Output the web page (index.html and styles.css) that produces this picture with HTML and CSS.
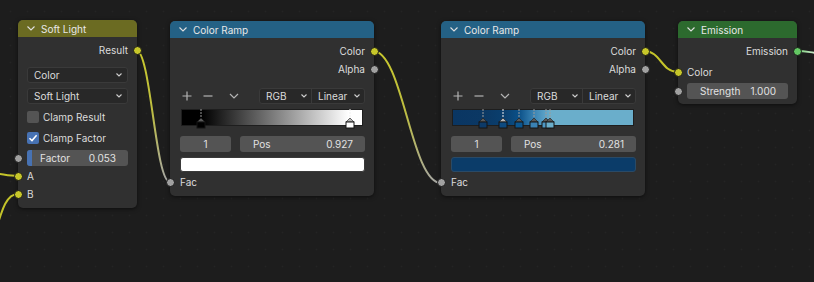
FILE: index.html
```html
<!DOCTYPE html>
<html lang="en">

<head>
    <meta charset="UTF-8">
    <title>Node Editor</title>
    <link rel="stylesheet" href="styles.css">
</head>

<body>
    <div class="canvas">

        <!-- wires are drawn under the nodes -->
        <svg class="wires" width="814" height="282" viewBox="0 0 814 282">
            <defs>
                <linearGradient id="w1" gradientUnits="userSpaceOnUse" x1="136" y1="50" x2="170" y2="182">
                    <stop offset="0" stop-color="#c9c92c" />
                    <stop offset="0.45" stop-color="#bdbd40" />
                    <stop offset="1" stop-color="#a6a6a6" />
                </linearGradient>
                <linearGradient id="w2" gradientUnits="userSpaceOnUse" x1="373" y1="51" x2="441" y2="183">
                    <stop offset="0" stop-color="#c9c92c" />
                    <stop offset="0.45" stop-color="#bdbd40" />
                    <stop offset="1" stop-color="#a6a6a6" />
                </linearGradient>
                <linearGradient id="w4" gradientUnits="userSpaceOnUse" x1="796" y1="51" x2="814" y2="52">
                    <stop offset="0" stop-color="#6fcf6f" />
                    <stop offset="1" stop-color="#c8e6c8" />
                </linearGradient>
            </defs>
            <path class="wire" stroke="url(#w1)" d="M136 50 C151 50 155 182 170 182" />
            <path class="wire" stroke="url(#w2)" d="M373 51 C403 51 411 183 441 183" />
            <path class="wire" stroke="#c4c42a" d="M644 51 C661 51 661 72 678 72" />
            <path class="wire" stroke="url(#w4)" d="M796 51 C806 51 808 52 816 53" />
            <path class="wire" stroke="#c4c42a" d="M-30 172 C0 172 4 176 18 176" />
            <path class="wire" stroke="#c4c42a" d="M-6 236 C2 210 6 194 18 194" />
        </svg>

        <!-- Soft Light (mix) node -->
        <div class="node soft-light">
            <div class="node-header header-mix">
                <svg class="collapse" width="8" height="5" viewBox="0 0 8 5"><path d="M0.5 0.5 L4 4 L7.5 0.5" /></svg>
                <span>Soft Light</span>
            </div>
            <div class="node-body">
                <div class="socket-row out-row first-row">
                    <span>Result</span>
                    <i class="socket out yellow"></i>
                </div>
                <div class="dropdown gap-8">
                    <span>Color</span>
                    <svg class="drop-arrow" width="6" height="4" viewBox="0 0 6 4"><path d="M0.5 0.5 L3 3 L5.5 0.5" /></svg>
                </div>
                <div class="dropdown gap-5">
                    <span>Soft Light</span>
                    <svg class="drop-arrow" width="6" height="4" viewBox="0 0 6 4"><path d="M0.5 0.5 L3 3 L5.5 0.5" /></svg>
                </div>
                <div class="check-row gap-5">
                    <i class="checkbox"></i>
                    <span>Clamp Result</span>
                </div>
                <div class="check-row gap-5">
                    <i class="checkbox checked">
                        <svg width="12" height="12" viewBox="0 0 12 12"><path d="M2.5 6.2 L5 8.6 L9.6 3.2" /></svg>
                    </i>
                    <span>Clamp Factor</span>
                </div>
                <div class="field-row gap-4">
                    <i class="socket in gray"></i>
                    <div class="number slider">
                        <i class="slider-fill" style="width: 5.3%"></i>
                        <span>Factor</span>
                        <span>0.053</span>
                    </div>
                </div>
                <div class="socket-row in-row gap-1">
                    <i class="socket in yellow"></i>
                    <span>A</span>
                </div>
                <div class="socket-row in-row">
                    <i class="socket in yellow"></i>
                    <span>B</span>
                </div>
            </div>
        </div>

        <!-- Color Ramp, grayscale -->
        <div class="node ramp ramp-one">
            <div class="node-header header-converter">
                <svg class="collapse" width="8" height="5" viewBox="0 0 8 5"><path d="M0.5 0.5 L4 4 L7.5 0.5" /></svg>
                <span>Color Ramp</span>
            </div>
            <div class="node-body">
                <div class="socket-row out-row first-row">
                    <span>Color</span>
                    <i class="socket out yellow"></i>
                </div>
                <div class="socket-row out-row">
                    <span>Alpha</span>
                    <i class="socket out gray"></i>
                </div>
                <div class="toolbar">
                    <div class="tools">
                        <svg class="tool" width="10" height="10" viewBox="0 0 10 10"><path d="M5 0.5 V9.5 M0.5 5 H9.5" /></svg>
                        <svg class="tool" width="10" height="10" viewBox="0 0 10 10"><path d="M0.5 5 H9.5" /></svg>
                        <svg class="tool" width="10" height="10" viewBox="0 0 10 10"><path d="M1 3 L5 7 L9 3" /></svg>
                    </div>
                    <div class="mode-group">
                        <div class="mode mode-rgb">
                            <span>RGB</span>
                            <svg class="drop-arrow" width="6" height="4" viewBox="0 0 6 4"><path d="M0.5 0.5 L3 3 L5.5 0.5" /></svg>
                        </div>
                        <div class="mode mode-interp">
                            <span>Linear</span>
                            <svg class="drop-arrow" width="6" height="4" viewBox="0 0 6 4"><path d="M0.5 0.5 L3 3 L5.5 0.5" /></svg>
                        </div>
                    </div>
                </div>
                <div class="ramp-wrap">
                    <div class="ramp-bar gray-ramp"></div>
                    <svg class="stop" style="left: 11%" width="10" height="20" viewBox="0 0 10 20">
                        <path class="stop-line" d="M5 0 V9" />
                        <polygon class="stop-tip" points="1,13 5,9 9,13" />
                        <rect class="stop-box" x="1" y="13" width="8" height="6" fill="#000" />
                    </svg>
                    <svg class="stop active" style="left: 92.7%" width="10" height="20" viewBox="0 0 10 20">
                        <path class="stop-line" d="M5 0 V9" />
                        <polygon class="stop-tip" points="1,13 5,9 9,13" />
                        <rect class="stop-box" x="1" y="13" width="8" height="6" fill="#fff" />
                    </svg>
                </div>
                <div class="number-row">
                    <div class="number index">1</div>
                    <div class="number pos">
                        <span>Pos</span>
                        <span>0.927</span>
                    </div>
                </div>
                <div class="swatch swatch-white"></div>
                <div class="socket-row in-row gap-1">
                    <i class="socket in gray"></i>
                    <span>Fac</span>
                </div>
            </div>
        </div>

        <!-- Color Ramp, blues -->
        <div class="node ramp ramp-two">
            <div class="node-header header-converter">
                <svg class="collapse" width="8" height="5" viewBox="0 0 8 5"><path d="M0.5 0.5 L4 4 L7.5 0.5" /></svg>
                <span>Color Ramp</span>
            </div>
            <div class="node-body">
                <div class="socket-row out-row first-row">
                    <span>Color</span>
                    <i class="socket out yellow"></i>
                </div>
                <div class="socket-row out-row">
                    <span>Alpha</span>
                    <i class="socket out gray"></i>
                </div>
                <div class="toolbar">
                    <div class="tools">
                        <svg class="tool" width="10" height="10" viewBox="0 0 10 10"><path d="M5 0.5 V9.5 M0.5 5 H9.5" /></svg>
                        <svg class="tool" width="10" height="10" viewBox="0 0 10 10"><path d="M0.5 5 H9.5" /></svg>
                        <svg class="tool" width="10" height="10" viewBox="0 0 10 10"><path d="M1 3 L5 7 L9 3" /></svg>
                    </div>
                    <div class="mode-group">
                        <div class="mode mode-rgb">
                            <span>RGB</span>
                            <svg class="drop-arrow" width="6" height="4" viewBox="0 0 6 4"><path d="M0.5 0.5 L3 3 L5.5 0.5" /></svg>
                        </div>
                        <div class="mode mode-interp">
                            <span>Linear</span>
                            <svg class="drop-arrow" width="6" height="4" viewBox="0 0 6 4"><path d="M0.5 0.5 L3 3 L5.5 0.5" /></svg>
                        </div>
                    </div>
                </div>
                <div class="ramp-wrap">
                    <div class="ramp-bar blue-ramp"></div>
                    <svg class="stop" style="left: 17%" width="10" height="20" viewBox="0 0 10 20">
                        <path class="stop-line" d="M5 0 V9" />
                        <polygon class="stop-tip" points="1,13 5,9 9,13" />
                        <rect class="stop-box" x="1" y="13" width="8" height="6" fill="#0c3a68" />
                    </svg>
                    <svg class="stop active" style="left: 28.1%" width="10" height="20" viewBox="0 0 10 20">
                        <path class="stop-line" d="M5 0 V9" />
                        <polygon class="stop-tip" points="1,13 5,9 9,13" />
                        <rect class="stop-box" x="1" y="13" width="8" height="6" fill="#0d4a80" />
                    </svg>
                    <svg class="stop" style="left: 36.6%" width="10" height="20" viewBox="0 0 10 20">
                        <path class="stop-line" d="M5 0 V9" />
                        <polygon class="stop-tip" points="1,13 5,9 9,13" />
                        <rect class="stop-box" x="1" y="13" width="8" height="6" fill="#0b5791" />
                    </svg>
                    <svg class="stop" style="left: 45%" width="10" height="20" viewBox="0 0 10 20">
                        <path class="stop-line" d="M5 0 V9" />
                        <polygon class="stop-tip" points="1,13 5,9 9,13" />
                        <rect class="stop-box" x="1" y="13" width="8" height="6" fill="#3a82b4" />
                    </svg>
                    <svg class="stop" style="left: 51.7%" width="10" height="20" viewBox="0 0 10 20">
                        <path class="stop-line" d="M5 0 V9" />
                        <polygon class="stop-tip" points="1,13 5,9 9,13" />
                        <rect class="stop-box" x="1" y="13" width="8" height="6" fill="#4f98c4" />
                    </svg>
                    <svg class="stop" style="left: 53.9%" width="10" height="20" viewBox="0 0 10 20">
                        <path class="stop-line" d="M5 0 V9" />
                        <polygon class="stop-tip" points="1,13 5,9 9,13" />
                        <rect class="stop-box" x="1" y="13" width="8" height="6" fill="#6aaecb" />
                    </svg>
                </div>
                <div class="number-row">
                    <div class="number index">1</div>
                    <div class="number pos">
                        <span>Pos</span>
                        <span>0.281</span>
                    </div>
                </div>
                <div class="swatch swatch-blue"></div>
                <div class="socket-row in-row gap-1">
                    <i class="socket in gray"></i>
                    <span>Fac</span>
                </div>
            </div>
        </div>

        <!-- Emission shader -->
        <div class="node emission">
            <div class="node-header header-shader">
                <svg class="collapse" width="8" height="5" viewBox="0 0 8 5"><path d="M0.5 0.5 L4 4 L7.5 0.5" /></svg>
                <span>Emission</span>
            </div>
            <div class="node-body">
                <div class="socket-row out-row first-row">
                    <span>Emission</span>
                    <i class="socket out green"></i>
                </div>
                <div class="socket-row in-row gap-3">
                    <i class="socket in yellow"></i>
                    <span>Color</span>
                </div>
                <div class="field-row gap-2">
                    <i class="socket in gray"></i>
                    <div class="number slider">
                        <span>Strength</span>
                        <span>1.000</span>
                    </div>
                </div>
            </div>
        </div>

    </div>
</body>

</html>
```

FILE: styles.css
```css
body {
    margin: 0;
    background: #1d1d1d;
}

.canvas {
    position: relative;
    width: 814px;
    height: 282px;
    overflow: hidden;
    background-color: #1d1d1d;
    background-image: radial-gradient(circle, #242424 0.7px, transparent 1.1px);
    background-size: 17px 17px;
    background-position: 2px 3px;
    font-family: Inter, "DejaVu Sans", sans-serif;
    font-size: 10px;
    color: #dcdcdc;
}

.wires {
    position: absolute;
    left: 0;
    top: 0;
}

.wire {
    fill: none;
    stroke-width: 2;
}

/* nodes sit on a free canvas */
.node {
    position: absolute;
    background: #303030;
    border-radius: 5px;
    box-shadow: 0 1px 4px rgba(0, 0, 0, 0.55);
}

.soft-light {
    left: 18px;
    top: 20px;
    width: 119px;
}

.ramp {
    width: 204px;
}

.ramp-one {
    left: 170px;
    top: 21px;
}

.ramp-two {
    left: 441px;
    top: 21px;
}

.emission {
    left: 678px;
    top: 21px;
    width: 119px;
}

.node-header {
    height: 17px;
    display: flex;
    align-items: center;
    gap: 6px;
    padding-left: 9px;
    border-radius: 5px 5px 0 0;
    color: #e8e8e8;
}

.header-mix {
    background: #6b6b22;
}

.header-converter {
    background: #246185;
}

.header-shader {
    background: #2c6a2e;
}

.collapse {
    fill: none;
    stroke: #e0e0e0;
    stroke-width: 1.1;
}

.node-body {
    display: flex;
    flex-direction: column;
    padding-bottom: 5px;
}

.gap-1 { margin-top: 1px; }
.gap-2 { margin-top: 2px; }
.gap-3 { margin-top: 3px; }
.gap-4 { margin-top: 4px; }
.gap-5 { margin-top: 5px; }
.gap-8 { margin-top: 8px; }

.first-row {
    margin-top: 4px;
}

.socket-row {
    position: relative;
    height: 18px;
    display: flex;
    align-items: center;
    padding: 0 9px;
}

.out-row {
    justify-content: flex-end;
}

.ramp .in-row {
    padding-left: 10px;
}

.socket {
    position: absolute;
    top: 50%;
    width: 7px;
    height: 7px;
    margin-top: -4.5px;
    border-radius: 50%;
    border: 1px solid #181818;
}

.socket.in {
    left: -4.5px;
}

.socket.out {
    right: -4.5px;
}

.yellow {
    background: #c7c72a;
}

.gray {
    background: #a1a1a1;
}

.green {
    background: #63c763;
}

.dropdown {
    height: 16px;
    margin-left: 9px;
    margin-right: 9px;
    padding: 0 5px 0 6px;
    display: flex;
    align-items: center;
    justify-content: space-between;
    background: #282828;
    border: 1px solid #3a3a3a;
    border-radius: 3px;
    box-sizing: border-box;
}

.drop-arrow {
    fill: none;
    stroke: #cfcfcf;
    stroke-width: 1.1;
}

.check-row {
    height: 16px;
    display: flex;
    align-items: center;
    gap: 4px;
    padding: 0 9px;
}

.checkbox {
    width: 12px;
    height: 12px;
    border-radius: 2px;
    background: #545454;
    display: flex;
}

.checkbox.checked {
    background: #4772b3;
}

.checkbox svg {
    fill: none;
    stroke: #ffffff;
    stroke-width: 1.5;
}

.field-row {
    position: relative;
    padding: 0 9px;
}

.number {
    height: 16px;
    display: flex;
    align-items: center;
    background: #545454;
    border-radius: 3px;
    box-sizing: border-box;
    color: #e2e2e2;
}

.slider {
    position: relative;
    justify-content: space-between;
    padding: 0 12px 0 13px;
    overflow: hidden;
}

.slider span {
    position: relative;
}

.slider-fill {
    position: absolute;
    left: 0;
    top: 0;
    bottom: 0;
    background: #4772b3;
}

.toolbar {
    height: 16px;
    margin-top: 10px;
    padding: 0 9px 0 10px;
    display: flex;
    align-items: center;
    justify-content: space-between;
}

.tools {
    display: flex;
    align-items: center;
    gap: 11px;
    padding-left: 2px;
}

.tool {
    fill: none;
    stroke: #b4b4b4;
    stroke-width: 1.2;
}

.tool:last-child {
    margin-left: 5px;
}

.mode-group {
    display: flex;
    height: 16px;
    border: 1px solid #3a3a3a;
    border-radius: 3px;
    background: #282828;
    box-sizing: border-box;
}

.mode {
    display: flex;
    align-items: center;
    justify-content: space-between;
    padding: 0 4px 0 6px;
}

.mode-rgb {
    width: 52px;
    border-right: 1px solid #3a3a3a;
    box-sizing: border-box;
}

.mode-interp {
    width: 52px;
    box-sizing: border-box;
}

.ramp-wrap {
    position: relative;
    height: 17px;
    margin: 5px 11px 0 11px;
}

.ramp-bar {
    height: 17px;
    box-sizing: border-box;
    border: 1px solid #1e1e1e;
}

.gray-ramp {
    background: linear-gradient(to right, #000 0%, #000 11%, #fff 92.7%, #fff 100%);
}

.blue-ramp {
    background: linear-gradient(to right,
            #0a3663 0%, #0b3864 17%, #0a3f6e 28.1%, #0b5088 36.6%,
            #3a84b4 45%, #5ea4c8 51.7%, #6aaecb 53.9%, #6aaecb 100%);
}

.stop {
    position: absolute;
    top: 0;
    margin-left: -5px;
    overflow: visible;
}

.stop-line {
    stroke: #9a9a9a;
    stroke-width: 1;
    stroke-dasharray: 2 1;
}

.stop-tip {
    fill: #5a5a5a;
    stroke: #1a1a1a;
    stroke-width: 0.6;
}

.stop-box {
    stroke: #151515;
    stroke-width: 1;
}

.stop.active .stop-line {
    stroke: #f0f0f0;
}

.stop.active .stop-tip {
    fill: #b8b8b8;
}

.number-row {
    display: flex;
    gap: 9px;
    margin-top: 10px;
    padding: 0 9px 0 10px;
}

.index {
    width: 51px;
    justify-content: center;
}

.pos {
    flex: 1;
    justify-content: space-between;
    padding: 0 12px 0 13px;
}

.swatch {
    height: 15px;
    margin: 5px 9px 0 10px;
    border-radius: 3px;
    box-sizing: border-box;
}

.swatch-white {
    background: #ffffff;
    border: 1px solid #3a3a3a;
}

.swatch-blue {
    background: #0b3c69;
    border: 1px solid #2a4a66;
}
```
